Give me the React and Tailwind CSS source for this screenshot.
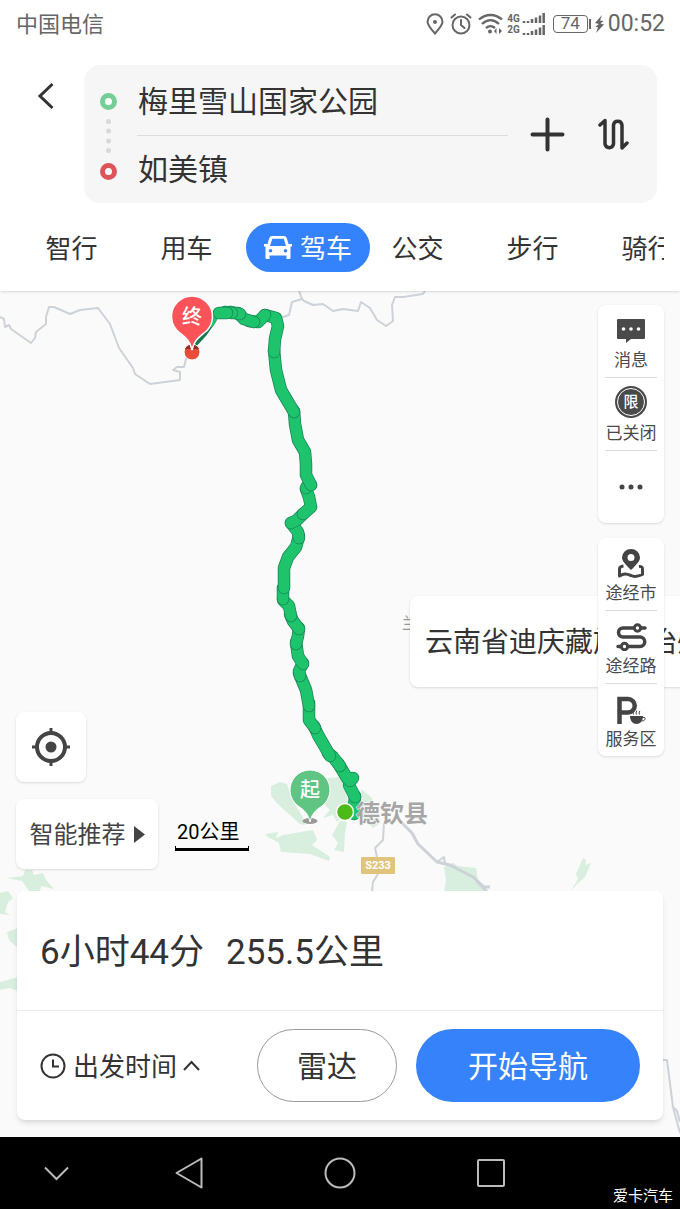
import { useState } from "react";
import clsx from "clsx";

const tabs = ["智行", "用车", "驾车", "公交", "步行", "骑行"];

// each piece is stroked on its own so the joints stay visible
const routePieces = [
  "M354 814 L354 806 L355 796",
  "M355 797 L351 789 L349 785",
  "M353 778 L350 781 L347 778 L338 763",
  "M340 766 L333 757 L328 753",
  "M330 756 L325 747 L318 735 L314 726",
  "M315 728 L309 720 L309 703",
  "M309 706 L306 690 L299 673",
  "M300 676 L299 671 L303 663",
  "M303 664 L298 656 L296 642",
  "M296 644 L298 636 L299 628",
  "M299 629 L293 621 L290 614",
  "M291 616 L289 606 L283 600",
  "M283 599 L283 588",
  "M284 588 L284 568 L288 557 L296 547 L299 536",
  "M299 538 L298 532 L291 523",
  "M291 523 L297 520 L303 514",
  "M303 514 L311 507 L309 497 L306 489",
  "M306 488 L307 486 L311 485",
  "M311 485 L306 475 L306 464 L305 452 L298 440 L295 424 L294 411",
  "M294 412 L281 390 L276 370 L274 350",
  "M274 352 L275 339 L278 326 L276 318 L265 315",
  "M265 315 L258 322 L249 321",
  "M254 322 L244 319 L238 313",
  "M240 314 L230 312",
  "M232 313 L225 312",
  "M227 313 L219 313",
];

const forests = [
  "M271 786 L280 782 L287 784 L290 793 L294 803 L303 817 L305 825 L300 824 L290 815 L282 808 L276 802 L271 796Z",
  "M328 778 L341 777 L347 797 L350 810 L337 822 L333 815 L323 818 L330 810 L323 803Z",
  "M265 834 L278 832 L276 838 L283 835 L313 830 L317 840 L312 845 L330 857 L329 861 L310 854 L281 852 L279 843 L268 837Z",
  "M340 821 L347 822 L345 833 L344 852 L334 850 L338 843 L332 835Z",
  "M361 789 L371 797 L378 810 L380 823 L373 828 L362 817Z",
  "M444 867 L453 863 L458 866 L476 868 L478 880 L484 892 L444 892 L446 880Z",
  "M583 858 L586 860 L585 865 L591 863 L585 877 L577 884 L571 891 L578 879 L576 874Z",
  "M7 878 L23 876 L25 870 L32 870 L34 875 L43 873 L46 880 L54 889 L41 886 L40 892 L30 892 L22 881Z",
  "M0 893 L8 891 L13 898 L8 902 L5 912 L10 915 L0 914Z",
  "M7 932 L18 928 L18 948 L9 940Z",
  "M0 982 L8 980 L18 977 L18 991 L9 988 L0 990Z",
];

const roads = [
  "M0 317 L4 319 L5 327 L9 325 L11 329 L31 343 L35 338 L36 332 L46 324 L46 317 L49 307 L54 307 L70 314 L80 310 L98 308 L110 324 L119 348 L133 368 L135 374 L150 384 L180 380 L180 372 L173 370 L177 367 L184 367 L186 359 L191 352",
  "M278 320 L283 317 L289 315 L292 302 L302 299 L299 291",
  "M301 298 L304 301 L313 305 L323 304 L333 311 L343 309 L358 311 L361 302 L370 308 L377 320 L386 326 L393 321 L392 305 L395 297 L403 297 L423 294 L425 291",
  "M384 823 L383 840 L375 848 L377 857 M378 874 L373 882 L372 892",
  "M437 862 L444 857 L445 864",
  "M663 1060 L667 1060 L673 1107 L680 1133 M672 1106 L677 1111 L680 1122",
];

function MapCanvas() {
  return (
    <svg
      className="absolute inset-0 h-full w-full"
      viewBox="0 291 680 846"
      preserveAspectRatio="xMidYMin slice"
      fontFamily='Roboto, "Noto Sans CJK SC", sans-serif'
    >
      {forests.map((d) => (
        <path key={d} d={d} fill="#d8eedf" />
      ))}
      <g fill="none" stroke="#cdd2d9" strokeLinejoin="round">
        {roads.map((d) => (
          <path key={d} d={d} strokeWidth="2" />
        ))}
        <path
          d="M400 821 L412 833 L418 844 L437 862 L450 865 L473 877 L484 887 L490 887 M476 880 L487 892"
          strokeWidth="3"
        />
      </g>
      <text x="402" y="629" fontSize="16" fill="#999">
        兰
      </text>
      <path
        d="M195 345 L205 334 L214 321"
        fill="none"
        stroke="#137a50"
        strokeWidth="4"
      />
      <path d="M209 325 L219 310" stroke="#1dc169" strokeWidth="8" />
      {routePieces.map((d) => (
        <g key={d} fill="none" strokeLinecap="round" strokeLinejoin="round">
          <path d={d} stroke="#1a8558" strokeWidth="12.500" />
          <path d={d} stroke="#1dc46b" strokeWidth="11" />
        </g>
      ))}

      <rect x="361" y="857" width="34" height="17" rx="1" fill="#e0c47c" />
      <text
        x="378"
        y="869"
        fontSize="11"
        fontWeight="700"
        textAnchor="middle"
        fill="#fff"
      >
        S233
      </text>
      <text
        x="356"
        y="822"
        fontSize="24"
        fontWeight="700"
        fill="#a6a6a6"
        stroke="#fff"
        strokeWidth="1"
        paintOrder="stroke"
      >
        德钦县
      </text>

      <circle cx="192" cy="352" r="8" fill="#e94c3b" stroke="#fff" />
      <path d="M185 349 A8 8 0 0 1 199 349Z" fill="#8f2c23" />
      <path
        d="M192 350 C190 341 186 338 180 333 A20.500 20.500 0 1 1 204 333 C198 338 194 341 192 350Z"
        fill="#fb5358"
        stroke="#fff"
        strokeWidth="1.500"
      />
      <text
        x="192"
        y="324"
        fontSize="20"
        fontWeight="500"
        textAnchor="middle"
        fill="#fff"
      >
        终
      </text>

      <ellipse cx="310" cy="821" rx="7.500" ry="3" fill="#999" />
      <path
        d="M310 822 C308 813 304 810 298 806 A20 20 0 1 1 322 806 C316 810 312 813 310 822Z"
        fill="#60c582"
        stroke="#fff"
        strokeWidth="1"
      />
      <text
        x="310"
        y="797"
        fontSize="20"
        fontWeight="500"
        textAnchor="middle"
        fill="#fff"
      >
        起
      </text>
      <circle
        cx="345"
        cy="812"
        r="8.500"
        fill="#4cbb17"
        stroke="#fff"
        strokeWidth="1.500"
      />
    </svg>
  );
}

function StatusBar() {
  return (
    <div className="flex h-12 items-center pr-[15px] pl-4 text-[22px] text-[#666]">
      <span className="flex-1">中国电信</span>
      <svg width="18" height="22" viewBox="0 0 18 22" fill="none">
        <path
          d="M9 20.500 C4 15 1.500 12 1.500 8.800 A7.500 7.500 0 0 1 16.500 8.800 C16.500 12 14 15 9 20.500Z"
          stroke="#666"
          strokeWidth="2"
        />
        <circle cx="9" cy="9" r="2" fill="#666" />
      </svg>
      <svg
        className="ml-1.5"
        width="22"
        height="22"
        viewBox="0 0 22 22"
        fill="none"
        stroke="#666"
        strokeWidth="2"
        strokeLinecap="round"
      >
        <circle cx="11" cy="12" r="8.500" />
        <path d="M11 7 V12 L14.500 15 M1.500 4.500 L5 1.500 M20.500 4.500 L17 1.500" />
      </svg>
      <svg
        className="ml-1.5"
        width="25"
        height="22"
        viewBox="0 0 25 22"
        fill="none"
        stroke="#666"
        strokeWidth="2.300"
      >
        <path d="M1 6.500 C8 0.500 17 0.500 24 6.500 M4 11 C9.500 6 15.500 6 21 11 M8 15 C11 12.500 14 12.500 17 15" />
        <circle cx="12" cy="18.500" r="2" fill="#666" stroke="none" />
        <path
          d="M18.500 15 V21 L16 18Z M21 21 V15 L24 18Z"
          fill="#666"
          stroke="none"
        />
      </svg>
      <span className="ml-1 flex flex-col text-[10px] leading-[11px] font-bold">
        <span>4G</span>
        <span>2G</span>
      </span>
      <svg
        className="ml-0.5"
        width="23"
        height="23"
        viewBox="0 0 23 23"
        stroke="#666"
        strokeWidth="2.500"
      >
        <path d="M2 8 V10 M6 8 V10 M10 6 V10 M14 4.500 V10 M18 2.500 V10 M21.700 0 V10" />
        <path d="M2 20 V22 M6 20 V22 M10 18 V22 M14 16.500 V22 M18 14.500 V22 M21.700 12 V22" />
      </svg>
      <span className="ml-2 flex h-[18px] w-[35px] items-center justify-center rounded-sm border border-[#666] text-[17px]">
        74
      </span>
      <span className="ml-px h-2.5 w-0.5 bg-[#666]" />
      <svg className="ml-1" width="9" height="18" viewBox="0 0 9 18" fill="#666">
        <path d="M7 0 L0 8 L4 9 L0.500 11.500 L3 12.500 L1 18 L9 9.500 L5.500 8.500 L8.500 6 L5 5.500Z" />
      </svg>
      <span className="ml-1 text-[23px]">00:52</span>
    </div>
  );
}

function Header() {
  const [activeTab, setActiveTab] = useState("驾车");

  return (
    <header className="relative z-10 bg-white pb-[19px] shadow-sm">
      <StatusBar />
      <div className="mt-[17px] flex items-start pr-[23px]">
        <button aria-label="返回" className="w-[84px] pt-[17px] pl-[37px]">
          <svg
            width="17"
            height="28"
            viewBox="0 0 17 28"
            fill="none"
            stroke="#333"
            strokeWidth="3"
          >
            <path d="M15.500 2 L3 14 L15.500 26" />
          </svg>
        </button>
        <div className="flex flex-1 items-center rounded-2xl bg-[#f6f6f6]">
          <svg
            className="mt-7 ml-4 shrink-0 self-start"
            width="17"
            height="87"
            viewBox="0 0 17 87"
            fill="#d9d9d9"
          >
            <circle
              cx="8.500"
              cy="8.500"
              r="6"
              fill="#fff"
              stroke="#75ce97"
              strokeWidth="5"
            />
            <circle cx="8.500" cy="28.500" r="2.500" />
            <circle cx="8.500" cy="38" r="2.500" />
            <circle cx="8.500" cy="48" r="2.500" />
            <circle cx="8.500" cy="57.500" r="2.500" />
            <circle
              cx="8.500"
              cy="78.500"
              r="6"
              fill="#fff"
              stroke="#dc5659"
              strokeWidth="5"
            />
          </svg>
          <div className="ml-5 flex-1 text-[30px] text-[#333]">
            <input
              aria-label="起点"
              className="block h-[71px] w-full border-b border-[#dcdcdc] bg-transparent pb-0.5 pl-px outline-none"
              defaultValue="梅里雪山国家公园"
            />
            <input
              aria-label="终点"
              className="block h-[67px] w-full bg-transparent pb-1.5 pl-px outline-none"
              defaultValue="如美镇"
            />
          </div>
          <button aria-label="添加途经点" className="ml-[22px]">
            <svg
              width="35"
              height="35"
              viewBox="0 0 35 35"
              stroke="#333"
              strokeWidth="4"
              strokeLinecap="round"
            >
              <path d="M17.500 2.500 V32.500 M2.500 17.500 H32.500" />
            </svg>
          </button>
          <button aria-label="交换起终点" className="mr-7 ml-[33px]">
            <svg
              width="31"
              height="33"
              viewBox="0 0 31 33"
              fill="none"
              stroke="#333"
              strokeWidth="3.500"
              strokeLinecap="round"
              strokeLinejoin="round"
            >
              <path d="M2 7 L7 2.500 V26 A4.300 4.300 0 0 0 15.500 26 V7 A4.300 4.300 0 0 1 24 7 V30 L29 25" />
            </svg>
          </button>
        </div>
      </div>
      <nav className="mt-5 mr-4 ml-3.5 flex overflow-hidden text-[26px] text-[#333]">
        {tabs.map((tab) => (
          <button
            key={tab}
            onClick={() => setActiveTab(tab)}
            className={clsx(
              "flex h-[49px] shrink-0 items-center justify-center",
              tab === activeTab
                ? "-mr-2.5 ml-0.5 w-[124px] gap-2 rounded-full bg-[#3583fc] text-white"
                : "w-[115px]"
            )}
          >
            {tab === "驾车" && (
              <svg width="28" height="23" viewBox="0 0 28 23" fill="currentColor">
                <path
                  fillRule="evenodd"
                  d="M8 0 H20 Q22 0 22.700 2 L24.500 8 H28 V10.500 H26.500 V22 Q26.500 23 25.500 23 H22.500 V19.500 H5.500 V23 H2.500 Q1.500 23 1.500 22 V10.500 H0 V8 H3.500 L5.300 2 Q6 0 8 0Z M8.300 2.800 L6 10 H22 L19.700 2.800Z M6.500 13 A1.800 1.800 0 1 0 6.500 16.600 A1.800 1.800 0 1 0 6.500 13Z M21.500 13 A1.800 1.800 0 1 0 21.500 16.600 A1.800 1.800 0 1 0 21.500 13Z"
                />
              </svg>
            )}
            <span className="pt-1">{tab}</span>
          </button>
        ))}
      </nav>
    </header>
  );
}

function MessageIcon() {
  return (
    <svg width="28" height="24" viewBox="0 0 28 24" fill="#4a4a4a">
      <path d="M1 0 H27 Q28 0 28 1 V19 Q28 20 27 20 H14 L9 24 V20 H1 Q0 20 0 19 V1 Q0 0 1 0Z" />
      <g fill="#fff">
        <circle cx="6.500" cy="10" r="1.800" />
        <circle cx="14" cy="10" r="1.800" />
        <circle cx="21.500" cy="10" r="1.800" />
      </g>
    </svg>
  );
}

function LimitIcon() {
  return (
    <span className="mb-1 flex h-8 w-8 items-center justify-center rounded-full bg-[#4a4a4a]">
      <span className="flex h-7 w-7 items-center justify-center rounded-full border border-white text-[15px] font-medium text-white">
        限
      </span>
    </span>
  );
}

function CityIcon() {
  return (
    <svg width="28" height="30" viewBox="0 0 28 30" fill="none">
      <path
        fillRule="evenodd"
        fill="#444"
        d="M14 21 C8 15 5 12 5 8.500 A9 8.500 0 0 1 23 8.500 C23 12 20 15 14 21Z M14 5 A3.500 3.500 0 1 0 14 12 A3.500 3.500 0 1 0 14 5Z"
      />
      <path
        d="M6.500 17 Q2.500 17.500 2.500 20 V27 C7 24.500 9 24.500 14 26.500 C18 28.500 21 27.500 25.500 25.500 V20 Q25.500 17 22 17.500"
        stroke="#444"
        strokeWidth="3"
        strokeLinejoin="round"
      />
    </svg>
  );
}

function RoadIcon() {
  return (
    <svg
      width="31"
      height="28"
      viewBox="0 0 31 28"
      fill="none"
      stroke="#444"
      strokeWidth="3.500"
      strokeLinecap="round"
    >
      <path d="M18 5 H7 A4.500 4.500 0 0 0 7 14 H24 A4.500 4.500 0 0 1 24 23.500 H12 M24.500 5 H29 M2 23.500 H5" />
      <circle cx="21.500" cy="5" r="3.200" strokeWidth="3" />
      <circle cx="8.500" cy="23.500" r="3.200" strokeWidth="3" />
    </svg>
  );
}

function ServiceIcon() {
  return (
    <svg width="29" height="29" viewBox="0 0 29 29" fill="none">
      <path
        d="M2.500 28 V3 H11 A6 6 0 0 1 11 16.500 H3"
        stroke="#444"
        strokeWidth="4.500"
      />
      <path
        d="M13 20 H26 C26 25 23 28 19.500 28 C16 28 13 25 13 20Z"
        fill="#444"
      />
      <path
        d="M25.500 21.500 Q29 21 28 23.500 Q27 25 24.500 25 M16.500 18.500 Q15.500 17 16.500 15 M19.500 18.500 Q18.500 17 19.800 14.500 M22.500 18.500 Q21.500 17 22.800 15"
        stroke="#444"
      />
    </svg>
  );
}

function ToolButton({ icon, label }) {
  return (
    <button className="flex w-full flex-col items-center pt-[9px] pb-[5px]">
      <span className="flex h-[34px] items-center">{icon}</span>
      <span className="leading-6">{label}</span>
    </button>
  );
}

function ToolPanel({ children }) {
  return (
    <div className="flex flex-col divide-y divide-[#dcdcdc] rounded-lg bg-white px-[7px] text-[17px] whitespace-nowrap text-[#4a4a4a] shadow">
      {children}
    </div>
  );
}

function MapTools() {
  return (
    <aside className="absolute top-3.5 right-4 flex w-[66px] flex-col gap-[15px]">
      <ToolPanel>
        <ToolButton icon={<MessageIcon />} label="消息" />
        <ToolButton icon={<LimitIcon />} label="已关闭" />
        <button
          aria-label="更多"
          className="flex h-[72px] items-center justify-center"
        >
          <svg width="24" height="6" viewBox="0 0 24 6" fill="#444">
            <circle cx="3" cy="3" r="2.500" />
            <circle cx="12" cy="3" r="2.500" />
            <circle cx="21" cy="3" r="2.500" />
          </svg>
        </button>
      </ToolPanel>
      <ToolPanel>
        <ToolButton icon={<CityIcon />} label="途经市" />
        <ToolButton icon={<RoadIcon />} label="途经路" />
        <ToolButton icon={<ServiceIcon />} label="服务区" />
      </ToolPanel>
    </aside>
  );
}

function RouteCard() {
  return (
    <div className="relative mx-[17px] mt-[22px] mb-[17px] rounded-lg bg-white text-[#333] shadow-md">
      <div className="flex h-[120px] items-center gap-[22px] border-b border-[#ebebeb] px-[23px] pt-1.5 text-[35px]">
        <span>6小时44分</span>
        <span>255.5公里</span>
      </div>
      <div className="flex h-[109px] items-center px-[23px]">
        <button className="flex items-center text-[26px]">
          <svg
            width="26"
            height="26"
            viewBox="0 0 26 26"
            fill="none"
            stroke="#333"
            strokeWidth="2"
          >
            <circle cx="13" cy="13" r="11.500" />
            <path d="M13 6.500 V13.500 H19" />
          </svg>
          <span className="ml-[7px] pt-1">出发时间</span>
          <svg
            className="ml-1.5"
            width="17"
            height="11"
            viewBox="0 0 17 11"
            fill="none"
            stroke="#333"
            strokeWidth="2"
          >
            <path d="M1 10 L8.500 2 L16 10" />
          </svg>
        </button>
        <button className="ml-auto h-[73px] w-[140px] rounded-full border border-[#999] pt-0.5 text-[30px]">
          雷达
        </button>
        <button className="ml-[19px] h-[73px] w-56 rounded-full bg-[#3682fb] pt-0.5 text-[30px] text-white">
          开始导航
        </button>
      </div>
    </div>
  );
}

function SystemNav() {
  return (
    <footer className="grid h-[72px] grid-cols-[113px_1fr_1fr_1fr_113px] items-center justify-items-center bg-black">
      <button aria-label="收起">
        <svg
          width="25"
          height="15"
          viewBox="0 0 25 15"
          fill="none"
          stroke="#bbb"
          strokeWidth="2"
        >
          <path d="M1 1.500 L12.500 13 L24 1.500" />
        </svg>
      </button>
      <button aria-label="后退">
        <svg
          width="28"
          height="32"
          viewBox="0 0 28 32"
          fill="none"
          stroke="#bbb"
          strokeWidth="2"
          strokeLinejoin="round"
        >
          <path d="M26.500 1.500 V30.500 L1.500 16Z" />
        </svg>
      </button>
      <button aria-label="主页">
        <svg
          width="32"
          height="32"
          viewBox="0 0 32 32"
          fill="none"
          stroke="#bbb"
          strokeWidth="2"
        >
          <circle cx="16" cy="16" r="14.500" />
        </svg>
      </button>
      <button aria-label="最近任务">
        <svg
          width="30"
          height="30"
          viewBox="0 0 30 30"
          fill="none"
          stroke="#bbb"
          strokeWidth="2"
        >
          <rect x="2" y="2" width="26" height="26" rx="1" />
        </svg>
      </button>
      <span className="self-end justify-self-end pr-[7px] pb-0.5 text-[15px] text-white">
        爱卡汽车
      </span>
    </footer>
  );
}

export default function App() {
  return (
    <div className="flex min-h-screen flex-col font-[Roboto,'Noto_Sans_CJK_SC',sans-serif]">
      <Header />
      <main className="relative flex flex-1 flex-col justify-end overflow-hidden bg-[#fafafa]">
        <MapCanvas />
        <div className="absolute top-[305px] left-[410px] flex h-[91px] items-center rounded-lg bg-white px-[15px] pt-0.5 text-[28px] whitespace-nowrap text-[#333] shadow">
          云南省迪庆藏族自治州
        </div>
        <MapTools />
        <button
          aria-label="定位"
          className="relative ml-4 flex h-[70px] w-[70px] items-center justify-center rounded-lg bg-white shadow"
        >
          <svg
            width="38"
            height="38"
            viewBox="0 0 38 38"
            fill="none"
            stroke="#444"
            strokeWidth="4"
          >
            <circle cx="19" cy="19" r="14" />
            <circle cx="19" cy="19" r="5.500" fill="#444" stroke="none" />
            <path d="M19 0 V6 M19 32 V38 M0 19 H6 M32 19 H38" strokeWidth="3" />
          </svg>
        </button>
        <div className="relative mt-[17px] ml-4 flex items-center gap-[17px]">
          <button className="flex h-[70px] w-[142px] items-center justify-center gap-2 rounded-lg bg-white text-2xl text-[#444] shadow">
            <span className="pt-0.5">智能推荐</span>
            <svg width="11" height="17" viewBox="0 0 11 17" fill="#444">
              <path d="M0 0 L11 8.500 L0 17Z" />
            </svg>
          </button>
          <div className="flex w-[74px] flex-col pl-0.5 text-[20px] leading-7 text-black">
            <span>20公里</span>
            <span className="-ml-0.5 h-[5px] border-x border-b-[3px] border-black" />
          </div>
        </div>
        <RouteCard />
      </main>
      <SystemNav />
    </div>
  );
}
